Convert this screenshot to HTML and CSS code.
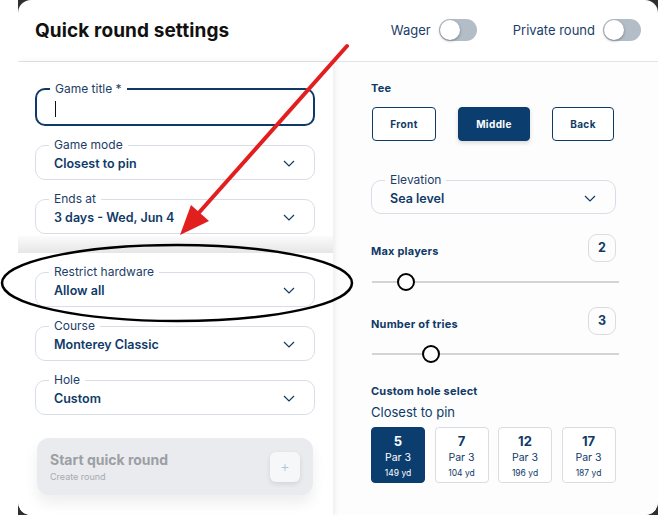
FILE: index.html
```html
<!DOCTYPE html>
<html>
<head>
<meta charset="utf-8">
<link rel="stylesheet" href="styles.css">
</head>
<body>
<div class="frame">
  <div class="stage">
    <div class="modal">
      <header class="head">
        <h1 class="title">Quick round settings</h1>
        <div class="toggles">
          <div class="tog"><span>Wager</span><span class="switch"><span class="knob"></span></span></div>
          <div class="tog"><span>Private round</span><span class="switch"><span class="knob"></span></span></div>
        </div>
      </header>
      <div class="body">
        <section class="left">
          <div class="fields first">
            <div class="field focus">
              <span class="legend">Game title *</span>
              <span class="caret"></span>
            </div>
            <div class="field">
              <span class="legend">Game mode</span>
              <span class="value">Closest to pin</span>
              <svg class="chev" width="12" height="7" viewBox="0 0 12 7"><polyline points="1,1 6,6 11,1" fill="none" stroke="#0f3a68" stroke-width="1.2"/></svg>
            </div>
            <div class="field">
              <span class="legend">Ends at</span>
              <span class="value">3 days - Wed, Jun 4</span>
              <svg class="chev" width="12" height="7" viewBox="0 0 12 7"><polyline points="1,1 6,6 11,1" fill="none" stroke="#0f3a68" stroke-width="1.2"/></svg>
            </div>
          </div>
          <div class="band"></div>
          <div class="fields second">
            <div class="field">
              <span class="legend">Restrict hardware</span>
              <span class="value">Allow all</span>
              <svg class="chev" width="12" height="7" viewBox="0 0 12 7"><polyline points="1,1 6,6 11,1" fill="none" stroke="#0f3a68" stroke-width="1.2"/></svg>
            </div>
            <div class="field">
              <span class="legend">Course</span>
              <span class="value">Monterey Classic</span>
              <svg class="chev" width="12" height="7" viewBox="0 0 12 7"><polyline points="1,1 6,6 11,1" fill="none" stroke="#0f3a68" stroke-width="1.2"/></svg>
            </div>
            <div class="field">
              <span class="legend">Hole</span>
              <span class="value">Custom</span>
              <svg class="chev" width="12" height="7" viewBox="0 0 12 7"><polyline points="1,1 6,6 11,1" fill="none" stroke="#0f3a68" stroke-width="1.2"/></svg>
            </div>
          </div>
          <div class="start">
            <div class="start-text">
              <div class="start-title">Start quick round</div>
              <div class="start-sub">Create round</div>
            </div>
            <div class="plus">+</div>
          </div>
        </section>
        <section class="right">
          <div class="sec-label tee-label">Tee</div>
          <div class="tees">
            <div class="tee w1">Front</div>
            <div class="tee w2 on">Middle</div>
            <div class="tee w3">Back</div>
          </div>
          <div class="field elev">
            <span class="legend">Elevation</span>
            <span class="value">Sea level</span>
            <svg class="chev" width="12" height="7" viewBox="0 0 12 7"><polyline points="1,1 6,6 11,1" fill="none" stroke="#0f3a68" stroke-width="1.2"/></svg>
          </div>
          <div class="row r1">
            <span class="sec-label">Max players</span>
            <span class="num">2</span>
          </div>
          <div class="slider s1"><span class="thumb" style="left:34px"></span></div>
          <div class="row r2">
            <span class="sec-label">Number of tries</span>
            <span class="num">3</span>
          </div>
          <div class="slider s2"><span class="thumb" style="left:59px"></span></div>
          <div class="sec-label chs">Custom hole select</div>
          <div class="mode">Closest to pin</div>
          <div class="holes">
            <div class="hole on"><b>5</b><span class="par">Par 3</span><span class="yd">149 yd</span></div>
            <div class="hole"><b>7</b><span class="par">Par 3</span><span class="yd">104 yd</span></div>
            <div class="hole"><b>12</b><span class="par">Par 3</span><span class="yd">196 yd</span></div>
            <div class="hole"><b>17</b><span class="par">Par 3</span><span class="yd">187 yd</span></div>
          </div>
        </section>
      </div>
    </div>
  </div>
  <svg class="annot" width="658" height="515" viewBox="0 0 658 515">
    <ellipse cx="177" cy="283" rx="175" ry="38" fill="none" stroke="#000" stroke-width="2.5"/>
    <line x1="347" y1="46" x2="196" y2="216" stroke="#e21f1f" stroke-width="4" stroke-linecap="round"/>
    <polygon points="180,235 209,221 191,205" fill="#e21f1f"/>
  </svg>
</div>
</body>
</html>
```
FILE: styles.css
```css
* { box-sizing: border-box; }
body { margin: 0; background: #fff; font-family: "Inter", "Noto Sans", sans-serif; color: #0f3a68; }
.frame { position: relative; width: 658px; height: 515px; overflow: hidden; background: #fff; }
.stage { margin-left: 18px; width: 640px; height: 515px; background: #2f2f2f; }
.modal { height: 100%; background: #fff; border-radius: 13px; display: flex; flex-direction: column; overflow: hidden; }

.head { height: 62px; flex: none; border-bottom: 1px solid #e2e4e7; display: flex; align-items: center; padding: 0 17px 1px 17px; }
.title { margin: 0; font-size: 19px; font-weight: 700; color: #111; letter-spacing: 0.1px; }
.toggles { margin-left: auto; display: flex; align-items: center; gap: 36px; }
.tog { display: flex; align-items: center; gap: 8px; font-size: 13px; color: #1d3d68; }
.switch { width: 38px; height: 22px; border-radius: 11px; background: #b3bdc8; display: flex; align-items: center; padding: 0 1px; }
.knob { width: 20px; height: 20px; border-radius: 50%; background: #fff; box-shadow: 0 1px 3px rgba(0,0,0,0.35); }

.body { flex: 1; display: grid; grid-template-columns: 315px 1fr; }
.left { padding: 0 18px 0 17px; background: #fff; box-shadow: 2px 0 6px rgba(0,0,0,0.07); position: relative; z-index: 1; display: flex; flex-direction: column; }
.fields { display: flex; flex-direction: column; gap: 19px; }
.fields.first { padding-top: 26px; }
.fields.second { padding-top: 0; }
.band { height: 17px; margin: 2px -18px 19px -17px; background: linear-gradient(#fbfbfb, #e6e6e6); }

.field { position: relative; height: 35px; border: 1.5px solid #d8dee6; border-radius: 10px; display: flex; align-items: center; padding: 2px 19px 0 18px; }
.field.focus { height: 38px; border: 2px solid #0f3a68; }
.legend { position: absolute; left: 13px; top: -9px; background: #fff; padding: 0 5px; font-size: 12px; line-height: 15px; color: #1d3d68; }
.value { font-size: 12.5px; font-weight: 600; color: #0f3a68; }
.chev { margin-left: auto; }
.caret { width: 1px; height: 16px; background: #111; margin-top: 1px; }

.start { margin: 23px 2px 0 2px; height: 57px; border-radius: 12px; background: #e9ebee; box-shadow: 0 8px 14px rgba(0,0,0,0.07); display: flex; align-items: center; padding: 0 13px 0 13px; }
.start-title { font-size: 14px; font-weight: 700; color: #9c9fa4; }
.start-sub { font-size: 9px; color: #a7aaaf; margin-top: 3px; }
.plus { margin-left: auto; width: 30px; height: 30px; border-radius: 6px; background: #f6f7f9; box-shadow: 0 2px 5px rgba(0,0,0,0.1); display: flex; align-items: center; justify-content: center; color: #b4c4de; font-size: 15px; font-weight: 300; }

.right { background: #fdfdfd; padding: 0 42px 0 38px; display: flex; flex-direction: column; }
.sec-label { font-size: 11px; font-weight: 700; color: #0f3a68; letter-spacing: 0.2px; }
.tee-label { margin-top: 19px; line-height: 14px; }
.tees { margin-top: 12px; display: flex; justify-content: space-between; padding-left: 1px; }
.tee { height: 34px; border: 1.5px solid #0f3a68; border-radius: 4px; display: flex; align-items: center; justify-content: center; font-size: 10px; font-weight: 700; letter-spacing: 0.4px; color: #0f3a68; background: #fff; }
.tee.w1 { width: 64px; }
.tee.w2 { width: 72px; }
.tee.w3 { width: 62px; margin-right: 2px; }
.tee.on { background: #0b3d6f; border-color: #0b3d6f; color: #fff; box-shadow: 0 2px 4px rgba(0,0,0,0.15); }
.field.elev { margin-top: 39px; height: 34px; }
.field.elev .legend { background: #fdfdfd; }

.row { display: flex; align-items: center; justify-content: space-between; }
.row .sec-label { margin-top: 5px; }
.r1 { margin-top: 20px; }
.r2 { margin-top: 24px; }
.num { width: 28px; height: 28px; border: 1.5px solid #dcdcdc; border-radius: 9px; display: flex; align-items: center; justify-content: center; font-size: 12.5px; font-weight: 700; color: #0f3a68; padding-bottom: 1px; }
.slider { position: relative; height: 2px; background: #d4d4d4; margin: 19px -3px 0 1px; }
.s2 { margin-top: 18px; }
.thumb { position: absolute; top: -8px; width: 18px; height: 18px; margin-left: -9px; border-radius: 50%; border: 2.5px solid #000; background: #fff; }
.chs { margin-top: 29px; }
.mode { margin-top: 6px; font-size: 13px; color: #0f3a68; }
.holes { margin-top: 7px; display: flex; gap: 9.5px; }
.hole { width: 54px; height: 56px; border: 1.5px solid #d9dde2; border-radius: 4px; display: flex; flex-direction: column; align-items: center; padding-top: 6px; background: #fff; color: #0f3a68; }
.hole b { font-size: 13px; font-weight: 700; line-height: 15px; }
.hole .par { font-size: 10.5px; line-height: 14px; margin-top: 2px; }
.hole .yd { font-size: 8.5px; line-height: 12px; margin-top: 2px; }
.hole.on { background: #0b3d6f; border-color: #0b3d6f; color: #fff; }

.annot { position: absolute; left: 0; top: 0; z-index: 10; pointer-events: none; }
```
